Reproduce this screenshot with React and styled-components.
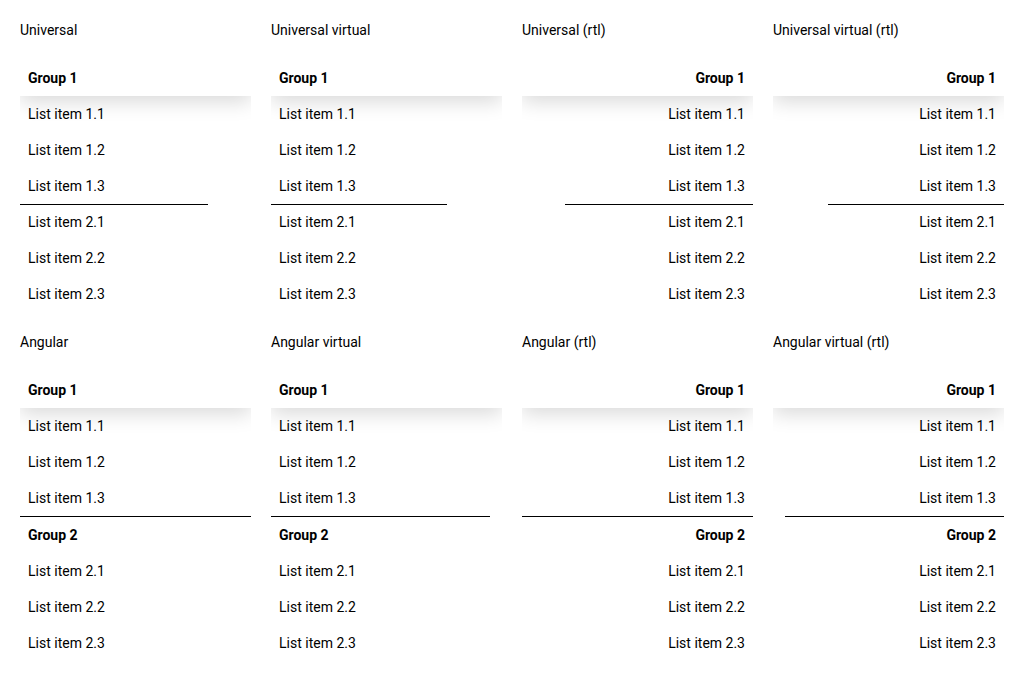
import React from "react";
import styled, { createGlobalStyle } from "styled-components";

const Global = createGlobalStyle`
  html, body { margin: 0; padding: 0; background: #fff; }
  body { font-family: Roboto, "Noto Sans", Arial, sans-serif; color: #000; }
`;

const Page = styled.div`
  display: grid;
  grid-template-columns: repeat(4, 231px);
  column-gap: 20px;
  row-gap: 20px;
  padding: 20px;
  align-items: start;
`;

const Panel = styled.section`
  display: flex;
  flex-direction: column;
`;

const Title = styled.div`
  font-size: 14px;
  line-height: 20px;
  height: 20px;
  margin-bottom: 20px;
`;

const List = styled.div`
  display: flex;
  flex-direction: column;
  overflow: hidden;
  direction: ${(p) => (p.$rtl ? "rtl" : "ltr")};
`;

const Header = styled.div`
  height: 36px;
  line-height: 36px;
  padding: 0 8px;
  font-size: 14px;
  font-weight: 700;
  background: #fff;
  box-shadow: ${(p) => (p.$shadow ? "0 6px 20px rgba(0,0,0,0.15)" : "none")};
  position: relative;
  z-index: ${(p) => (p.$shadow ? 1 : 0)};
`;

const Item = styled.div`
  height: 36px;
  line-height: 36px;
  padding: 0 8px;
  font-size: 14px;
  position: relative;
  z-index: 2;
`;

const Divider = styled.div`
  height: 1px;
  background: #000;
  width: ${(p) => p.$width}px;
  margin-bottom: ${(p) => (p.$overlay ? "-1px" : "0")};
  position: relative;
  z-index: 3;
`;

const panels = [
  { title: "Universal", rtl: false, second: false, divider: 188 },
  { title: "Universal virtual", rtl: false, second: false, divider: 176 },
  { title: "Universal (rtl)", rtl: true, second: false, divider: 188 },
  { title: "Universal virtual (rtl)", rtl: true, second: false, divider: 176 },
  { title: "Angular", rtl: false, second: true, divider: 231 },
  { title: "Angular virtual", rtl: false, second: true, divider: 219 },
  { title: "Angular (rtl)", rtl: true, second: true, divider: 231 },
  { title: "Angular virtual (rtl)", rtl: true, second: true, divider: 219 },
];

function GroupList({ rtl, second, divider }) {
  return (
    <List $rtl={rtl}>
      <Header $shadow>Group 1</Header>
      {["1.1", "1.2", "1.3"].map((n) => (
        <Item key={n}>
          <bdi>List item {n}</bdi>
        </Item>
      ))}
      <Divider $width={divider} $overlay={!second} />
      {second && <Header>Group 2</Header>}
      {["2.1", "2.2", "2.3"].map((n) => (
        <Item key={n}>
          <bdi>List item {n}</bdi>
        </Item>
      ))}
    </List>
  );
}

export default function App() {
  return (
    <>
      <Global />
      <Page>
        {panels.map((p) => (
          <Panel key={p.title}>
            <Title>{p.title}</Title>
            <GroupList rtl={p.rtl} second={p.second} divider={p.divider} />
          </Panel>
        ))}
      </Page>
    </>
  );
}
